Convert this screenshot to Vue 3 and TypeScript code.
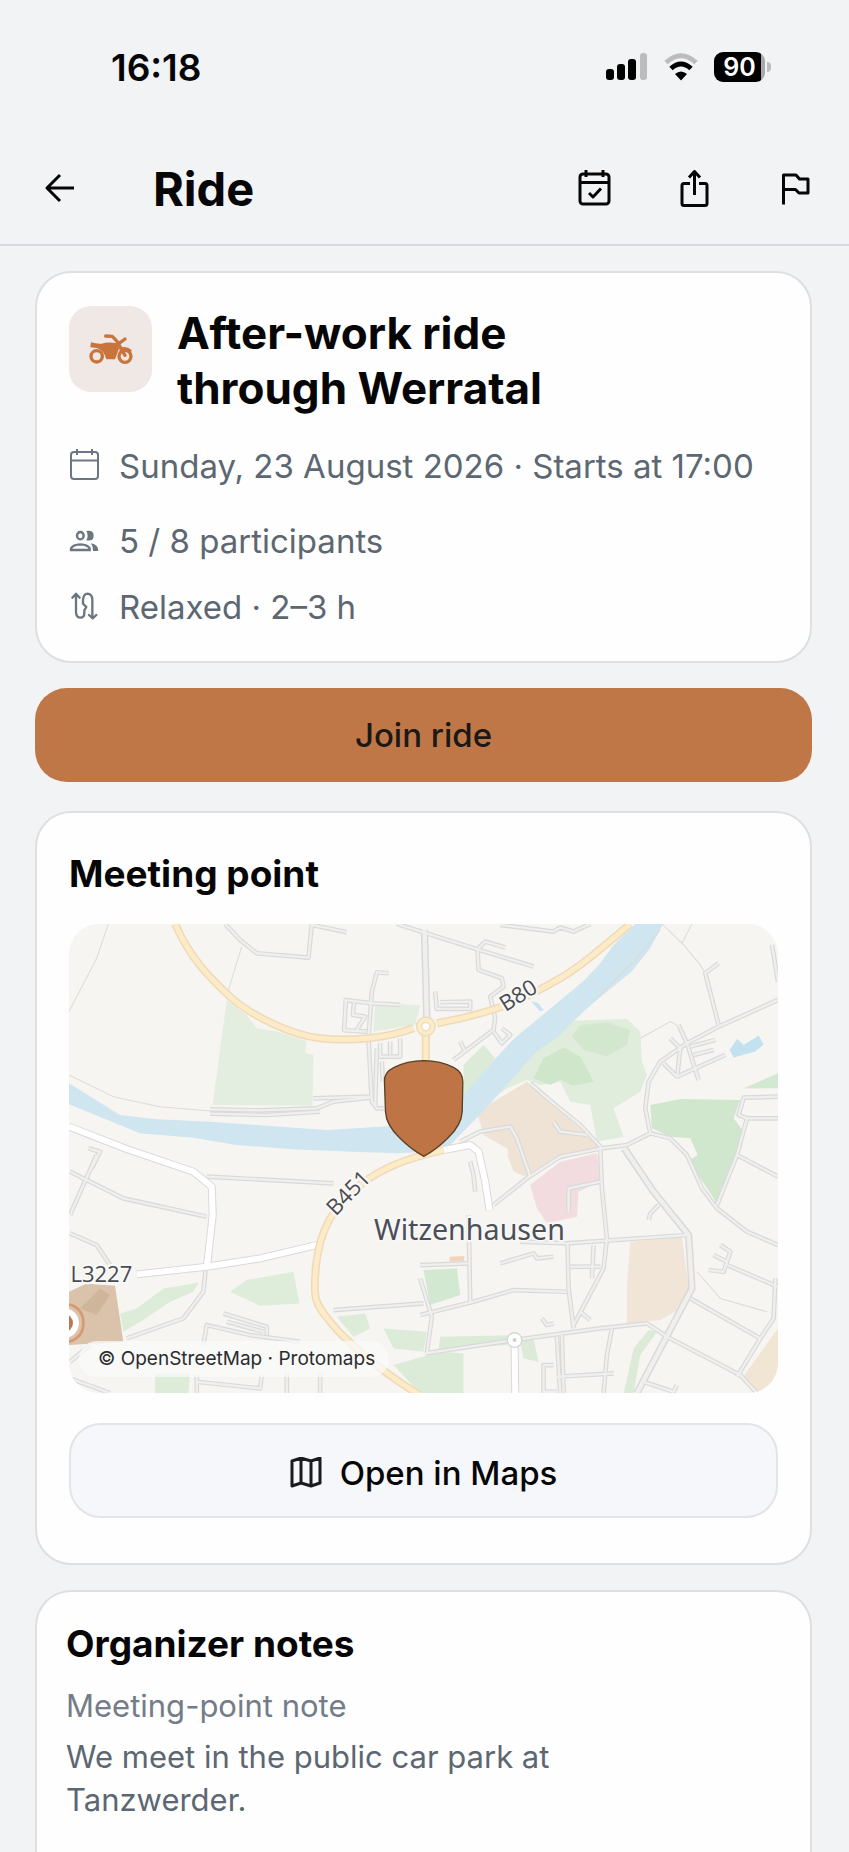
<script setup lang="ts">
interface Area { fill: string; points: string }

const areas: Area[] = [
  { fill: '#e3eee0', points: '500,255 560,300 590,340 650,350 740,378 735,415 760,420 757,572 458,570 475,440' },
  { fill: '#e3eee0', points: '945,262 1080,272 1065,330 940,350' },
  { fill: '#e0eddc', points: '1160,655 1350,480 1500,318 1700,312 1740,350 1745,440 1760,480 1740,530 1660,580 1690,665 1610,680 1590,570 1530,560 1500,500 1440,510 1400,495 1340,520' },
  { fill: '#cfe6cb', points: '1420,490 1450,430 1510,398 1560,425 1600,500 1540,512 1500,495 1470,510' },
  { fill: '#d3e7cf', points: '1535,365 1560,330 1640,322 1710,345 1700,390 1640,425 1570,405' },
  { fill: '#dcebd8', points: '1210,450 1270,390 1305,430 1230,520 1210,540' },
  { fill: '#d0e7cd', points: '1770,570 1860,552 2040,555 2020,610 2050,650 2030,720 1970,870 1960,850 1920,790 1880,740 1912,720 1890,670 1830,665 1775,640' },
  { fill: '#d3e8d0', points: '2050,520 2153,475 2153,520' },
  { fill: '#efe3d6', points: '1250,590 1400,500 1450,540 1580,660 1620,700 1480,740 1410,790 1370,775 1340,700 1270,660' },
  { fill: '#efe3d6', points: '1340,715 1380,730 1400,780 1360,770' },
  { fill: '#f3dce0', points: '1410,810 1500,740 1610,715 1625,795 1555,830 1550,905 1460,925 1430,880' },
  { fill: '#f1e5d7', points: '1710,980 1865,965 1885,1120 1860,1180 1800,1215 1700,1225 1700,1120' },
  { fill: '#f1e5d3', points: '2153,1240 2153,1434 2080,1434 2045,1390' },
  { fill: '#dcecd9', points: '180,1195 230,1180 310,1120 415,1103 400,1130 330,1160 250,1215 190,1250' },
  { fill: '#deecda', points: '510,1130 560,1095 700,1070 718,1165 600,1172' },
  { fill: '#dcecd9', points: '285,1375 390,1375 385,1435 285,1435' },
  { fill: '#d3e8d0', points: '1090,1065 1190,1060 1200,1140 1110,1170' },
  { fill: '#dcecd9', points: '830,1205 915,1195 930,1240 880,1265' },
  { fill: '#dcecd9', points: '970,1240 1100,1250 1090,1310 1000,1300' },
  { fill: '#dcebd8', points: '1000,1350 1140,1310 1210,1315 1210,1435 1080,1435' },
  { fill: '#dcebd8', points: '1140,1265 1360,1260 1340,1290 1135,1305' },
  { fill: '#dcebd8', points: '1380,1280 1420,1270 1435,1340 1390,1330' },
  { fill: '#dcebd8', points: '1765,1245 1790,1250 1740,1320 1720,1435 1690,1435 1720,1300' },
  { fill: '#dbc3ab', points: '27,1130 80,1105 165,1112 190,1280 27,1290' },
  { fill: '#cfb59a', points: '60,1180 120,1120 150,1140 110,1200' },
  { fill: '#f0d4bd', points: '1168,1025 1212,1023 1212,1038 1168,1040' },
]

const minorRoads: string[] = [
  '495,27 540,75 590,115 745,128 755,30 860,52',
  '1010,27 1240,100 1420,155',
  '985,175 950,172 935,230 925,370 935,560 950,580 970,580',
  '850,255 935,265 1020,270',
  '857,258 852,346 920,350',
  '882,262 878,300 915,305 890,345',
  '960,385 960,425 1020,425 1020,370',
  '990,380 990,420',
  '950,400 945,575',
  '965,440 968,500',
  '450,583 600,586 770,580 820,560 930,548',
  '450,596 620,600 780,590',
  '760,550 930,545',
  '1255,100 1275,80 1335,98',
  '1252,100 1255,165 1325,190 1330,215 1290,245 1305,310 1300,345 1180,435',
  '1125,230 1130,282 1230,282 1230,260 1140,262',
  '1200,380 1215,410',
  '1300,350 1325,385 1350,360 1325,340',
  '1320,30 1480,50 1500,38 1540,50 1590,27',
  '1975,145 1935,175 1975,330',
  '2153,255 1975,335 1880,385 1800,440 1765,500 1755,580 1770,655',
  '1855,330 1880,385 1915,495',
  '1810,445 1850,485 1995,420',
  '1830,370 1860,400 1850,490',
  '1890,395 1965,375',
  '1900,420 1960,405',
  '2135,90 2153,200',
  '1410,505 1480,565 1560,630 1625,700 1700,690 1770,655 1830,670 1880,720 1925,820 1970,880 2060,950 2153,990',
  '2153,545 2050,548 2035,600 2060,610 2153,610',
  '2060,610 2030,720 1970,870',
  '2030,720 2153,785',
  '1480,620 1500,650 1580,660',
  '1625,700 1500,725 1400,790 1300,870',
  '1200,680 1260,650 1350,635 1370,670 1410,785',
  '1620,700 1625,820 1640,970 1630,1060 1540,1230',
  '1380,980 1520,985 1880,960',
  '1522,985 1525,1120 1540,1240',
  '1080,1200 1240,1160 1360,1125 1520,1130',
  '1225,900 1230,1160',
  '1080,1050 1225,1045',
  '1080,1090 1115,1205 1100,1315',
  '1095,1315 1360,1275 1620,1240 1760,1225 1820,1265 2040,1380 2090,1434',
  '1890,1150 2100,1270',
  '2145,1090 2140,1210 2100,1270 2030,1385',
  '2153,1115 2000,1050',
  '1980,990 2010,1010 1990,1070 1945,1065',
  '1960,1020 2000,1040',
  '1490,1265 1500,1434',
  '1505,1260 1510,1434',
  '1655,1240 1640,1320 1630,1434',
  '1490,1385 1660,1375',
  '1750,1400 1840,1430 1850,1410',
  '1525,890 1525,820 1620,800',
  '1765,915 1770,895 1795,870',
  '1600,990 1595,1090',
  '1530,1055 1620,1055',
  '1320,1045 1420,1015 1430,1030 1480,1025',
  '1480,1350 1450,1350 1450,1430 1490,1430',
  '1445,1210 1460,1230 1480,1225',
  '1560,1190 1590,1215',
  '1230,740 1240,780 1245,830',
  '110,720 30,900',
  '30,770 190,850 440,905',
  '440,785 820,805',
  '30,955 110,990 150,1050',
  '200,1270 370,1210 430,1130 440,1030',
  '820,1185 1090,1165',
  '430,1290 440,1230 570,1260 720,1280',
  '490,1195 620,1235 620,1260',
  '500,1220 610,1250',
  '30,1340 90,1290',
  '410,1400 600,1420 605,1380',
  '410,1380 410,1434',
  '680,1370 680,1434',
  '780,1370 780,1434',
  '30,1390 150,1434',
  '95,760 120,710 85,700',
]

const wideRoads: string[] = [
  '1093,45 1100,310',
  '1692,700 1780,830 1885,960 1895,1120 1730,1434',
]

const whiteRoads: string[] = [
  '27,635 200,702 400,770 455,815 458,900 440,1060',
  '230,1078 440,1055 600,1030 770,990',
  '1150,705 1230,690 1255,710 1275,800 1288,885',
  '1363,1275 1365,1434',
]

const tracks: string[] = [
  '145,27 110,130 27,290',
  '545,95 505,225',
  '27,480 160,545 300,575 450,588',
  '1805,27 1870,90 1920,150 1935,175',
  '1895,27 1865,85',
  '1600,260 1720,140 1800,45',
  '1740,370 1830,320 1850,330',
  '1910,1070 1980,1150 2120,1190',
]

const yellowRoads: string[] = [
  'M345 27C390 130 450 190 510 245S690 360 780 370S980 370 1060 340',
  'M1130 325C1200 312 1250 300 1310 280S1440 225 1500 190S1630 95 1710 27',
  'M1097 360V440',
  'M1150 705C1080 722 980 745 900 810S780 940 768 1050S770 1170 810 1220S960 1370 1080 1440',
]

const openInMaps = () => window.open('geo:51.34,9.86')
</script>

<template>
  <div class="page">
    <div class="status">
      <time class="clock">16:18</time>
      <div class="status-icons">
        <svg width="42" height="28" viewBox="0 0 42 28" aria-hidden="true">
          <rect x="0" y="16" width="8" height="11" rx="3" />
          <rect x="11" y="11" width="8" height="16" rx="3" />
          <rect x="22" y="6" width="8" height="21" rx="3" />
          <rect x="34" y="0" width="7" height="27" rx="3" fill="#bcbcbe" />
        </svg>
        <svg width="34" height="28" viewBox="0 0 34 28" fill="none" aria-hidden="true">
          <path d="M2 9.500Q17-4 32 9.500" stroke="#bcbcbe" stroke-width="5" />
          <path d="M7 15.500Q17 6.500 27 15.500" stroke="#000" stroke-width="5" />
          <path d="M11 21Q17 16 23 21L17 27.500Z" fill="#000" />
        </svg>
        <div class="battery"><span class="battery-level">90</span></div>
      </div>
    </div>

    <header class="bar">
      <button class="icon-button" type="button" aria-label="Back">
        <svg width="32" height="32" viewBox="0 0 32 32" class="line"><path d="M30 15H4M16 2L3 15L16 28" /></svg>
      </button>
      <h1>Ride</h1>
      <div class="actions">
        <button class="icon-button" type="button" aria-label="Add to calendar">
          <svg width="34" height="38" viewBox="0 0 34 38" class="line">
            <rect x="3" y="4" width="29" height="30" rx="3" />
            <path d="M3 12.500H32M9 0V7M26 0V7M12 23L16 27L24 18.500" />
          </svg>
        </button>
        <button class="icon-button" type="button" aria-label="Share">
          <svg width="34" height="38" viewBox="0 0 34 38" class="line">
            <path d="M12 13.500H6Q4 13.500 4 15.500V33.500Q4 35.500 6 35.500H27Q29 35.500 29 33.500V15.500Q29 13.500 27 13.500H21M16.500 25V2M11 7.500L16.500 1.500L22 7.500" />
          </svg>
        </button>
        <button class="icon-button" type="button" aria-label="Report">
          <svg width="34" height="38" viewBox="0 0 34 38" class="line">
            <path d="M4.500 34.500V5H17L20.500 9H29V23H20L16.500 19.500H4.500" />
          </svg>
        </button>
      </div>
    </header>

    <main>
      <section class="card summary">
        <div class="heading">
          <div class="tile">
            <svg width="44" height="32" viewBox="0 0 132 94" aria-hidden="true">
              <g fill="none" stroke="#c9743c" stroke-width="10">
                <circle cx="23" cy="69" r="17" />
                <circle cx="108" cy="69" r="18" />
                <path d="M50 8L70 9L84 24L108 66M84 32L96 26L108 17" stroke-linecap="round" stroke-linejoin="round" />
              </g>
              <path d="M6 27Q22 32 38 31Q56 25 84 30L90 46L78 78H52Q46 52 24 44L4 42Z" fill="#c9743c" />
              <path d="M92 44Q112 36 128 50L126 58Q106 48 92 60Z" fill="#c9743c" />
            </svg>
          </div>
          <h2 class="title">After-work ride<br>through Werratal</h2>
        </div>
        <ul class="facts">
          <li>
            <svg width="30" height="34" viewBox="0 0 30 34" class="fact-line">
              <rect x="2" y="3" width="27" height="27" rx="3" />
              <path d="M2 11.500H29M8 0V6M23 0V6" />
            </svg>
            <span>Sunday, 23 August 2026 · Starts at 17:00</span>
          </li>
          <li>
            <svg width="30" height="32" viewBox="0 0 90 96">
              <g fill="none" stroke="#6c7681" stroke-width="7">
                <ellipse cx="34" cy="32" rx="10" ry="11" />
                <path d="M6 75V70Q12 59 34 58Q56 59 62 70V75Z" />
              </g>
              <path d="M52 18Q74 14 74 32Q74 50 52 46Q60 32 52 18ZM66 55Q88 59 88 78H72Q72 64 66 55Z" fill="#6c7681" />
            </svg>
            <span>5 / 8 participants</span>
          </li>
          <li>
            <svg width="30" height="32" viewBox="0 0 90 96" fill="none" stroke="#6c7681" stroke-width="7" stroke-linecap="round" stroke-linejoin="round">
              <path d="M10 20L21 8L32 20M21 10V64Q22 80 34 80Q46 80 46 66V58L52 48L42 38V26Q44 8 56 8Q70 10 70 26V80M60 72L71 82L82 72" />
            </svg>
            <span>Relaxed · 2–3 h</span>
          </li>
        </ul>
      </section>

      <button class="join" type="button">Join ride</button>

      <section class="card meeting">
        <h2>Meeting point</h2>
        <div class="map">
          <svg class="map-canvas" viewBox="27 27 2126 1407" preserveAspectRatio="xMidYMid slice" role="img" aria-label="Map of Witzenhausen">
            <rect x="27" y="27" width="2126" height="1407" fill="#f6f5f2" />
            <polygon v-for="a in areas" :key="a.points" :points="a.points" :fill="a.fill" />
            <polygon
              fill="#cfe5f0"
              points="27,505 180,600 280,612 450,620 620,632 800,645 985,634 1060,612 1205,545 1270,470 1360,372 1450,298 1570,198 1620,145 1660,90 1725,27 1808,27 1770,100 1712,172 1630,238 1570,290 1490,368 1430,408 1362,485 1270,588 1170,690 1100,710 1010,715 880,710 700,703 530,690 400,668 240,655 130,610 27,568"
            />
            <polygon fill="#c3e1ef" points="2008,405 2030,372 2050,390 2095,362 2110,388 2085,410 2020,428" />
            <polygon fill="#c9e3ef" points="1412,258 1435,265 1450,285 1440,290" />
            <g class="track"><polyline v-for="t in tracks" :key="t" :points="t" /></g>
            <g class="casing"><polyline v-for="r in minorRoads" :key="r" :points="r" /></g>
            <g class="casing wide"><polyline v-for="r in wideRoads" :key="r" :points="r" /></g>
            <g class="inner"><polyline v-for="r in minorRoads" :key="r" :points="r" /></g>
            <g class="inner wide"><polyline v-for="r in wideRoads" :key="r" :points="r" /></g>
            <g class="white-casing"><polyline v-for="r in whiteRoads" :key="r" :points="r" /></g>
            <g class="white-inner"><polyline v-for="r in whiteRoads" :key="r" :points="r" /></g>
            <g class="yellow-casing"><path v-for="r in yellowRoads" :key="r" :d="r" /></g>
            <g class="yellow-inner"><path v-for="r in yellowRoads" :key="r" :d="r" /></g>
            <circle cx="1097" cy="335" r="20" fill="#fff" stroke="#f0dcb9" stroke-width="20" />
            <circle cx="1097" cy="335" r="20" fill="none" stroke="#fceccb" stroke-width="11" />
            <circle cx="1363" cy="1275" r="22" fill="#fff" stroke="#d6d6d6" stroke-width="4" />
            <circle cx="1363" cy="1275" r="6" fill="#d0d0d0" />
            <path d="M27 1168Q70 1180 70 1224T27 1280" fill="none" stroke="#d59a70" stroke-width="8" />
            <circle cx="12" cy="1224" r="36" fill="#b8794f" stroke="#fff" stroke-width="18" />
            <g class="road-label">
              <text transform="translate(1374 242) rotate(-32)" y="22">B80</text>
              <text transform="translate(865 834) rotate(-46)" y="22">B451</text>
              <text x="124" y="1102">L3227</text>
            </g>
            <text class="town-label" x="1228" y="975">Witzenhausen</text>
            <path
              d="M1091 724Q1052 702 1018 668Q978 630 976 590L973 502Q970 472 1002 457Q1040 438 1091 437Q1142 438 1180 457Q1209 472 1208 502L1206 590Q1204 630 1164 668Q1130 702 1091 724Z"
              fill="#be7445" stroke="#5b4029" stroke-width="4" stroke-linejoin="round"
            />
          </svg>
          <small class="credit">© OpenStreetMap · Protomaps</small>
        </div>
        <button class="open" type="button" @click="openInMaps">
          <svg width="32" height="32" viewBox="0 0 32 32" class="map-icon">
            <path d="M2 4L11 1L21 4L30 1V26L21 29L11 26L2 29ZM11 1V26M21 4V29" />
          </svg>
          <span>Open in Maps</span>
        </button>
      </section>

      <section class="card notes">
        <h2>Organizer notes</h2>
        <h3>Meeting-point note</h3>
        <p>We meet in the public car park at<br>Tanzwerder.</p>
      </section>
    </main>
  </div>
</template>

<style>
body {
  margin: 0;
  background: #f2f3f5;
}
</style>

<style scoped>
.page {
  box-sizing: border-box;
  min-height: 100vh;
  display: flex;
  flex-direction: column;
  background: #f2f3f5;
  color: #060607;
  font-family: Inter, "Liberation Sans", sans-serif;
}
h1, h2, h3, p, ul {
  margin: 0;
  padding: 0;
}
svg {
  display: block;
  flex: none;
}
button {
  font: inherit;
  color: inherit;
  padding: 0;
  border: 0;
  cursor: pointer;
}
.status {
  display: flex;
  justify-content: space-between;
  align-items: center;
  height: 134px;
  padding: 0 78px 0 111px;
}
.clock {
  font-size: 37px;
  font-weight: 600;
}
.status-icons {
  display: flex;
  align-items: center;
  gap: 16px;
}
.battery {
  position: relative;
  width: 51px;
  height: 30px;
  border-radius: 9px;
  background: linear-gradient(90deg, #000 47px, #a9a9ab 47px);
  color: #fff;
  margin-right: 6px;
}
.battery::after {
  content: "";
  position: absolute;
  right: -6px;
  top: 10px;
  width: 4px;
  height: 10px;
  border-radius: 0 5px 5px 0;
  background: #bcbcbe;
}
.battery-level {
  display: block;
  text-align: center;
  font-size: 25px;
  font-weight: 600;
  line-height: 30px;
}
.bar {
  display: flex;
  align-items: center;
  height: 110px;
  padding: 0 36px 0 44px;
  border-bottom: 2px solid #d9d9df;
}
.icon-button {
  background: none;
}
.line {
  fill: none;
  stroke: #060607;
  stroke-width: 3;
  stroke-linejoin: round;
}
h1 {
  margin-left: 77px;
  font-size: 47px;
  font-weight: 700;
  line-height: 56px;
}
.actions {
  display: flex;
  gap: 67px;
  margin-left: auto;
}
main {
  flex: 1;
  display: flex;
  flex-direction: column;
  padding: 25px 37px 0 35px;
}
.card {
  background: #fefefe;
  border: 2px solid #dddfe1;
  border-radius: 36px;
}
.summary {
  padding: 33px 32px 34px;
}
.heading {
  display: flex;
  gap: 25px;
}
.tile {
  display: flex;
  align-items: center;
  justify-content: center;
  width: 83px;
  height: 86px;
  border-radius: 22px;
  background: #f0e8e4;
}
.title {
  font-size: 44px;
  font-weight: 700;
  line-height: 55px;
}
.facts {
  list-style: none;
  color: #5d6772;
  font-size: 33px;
  line-height: 40px;
  padding-top: 30px;
}
.facts li {
  display: flex;
  align-items: center;
  gap: 20px;
}
.facts li + li {
  margin-top: 26px;
}
.facts li:nth-child(2) {
  margin-top: 35px;
}
.fact-line {
  fill: none;
  stroke: #6c7681;
  stroke-width: 2;
}
.join {
  height: 94px;
  margin: 25px 0 29px;
  border-radius: 32px;
  background: #bf7748;
  color: #1c1816;
  font-size: 33px;
  font-weight: 500;
}
.meeting {
  padding: 37px 32px 45px;
}
.card h2:not(.title) {
  font-size: 37px;
  font-weight: 700;
  line-height: 48px;
}
.map {
  position: relative;
  height: 469px;
  margin: 26px 0 30px;
  border-radius: 30px;
  overflow: hidden;
}
.map-canvas {
  width: 100%;
  height: 100%;
}
.map-canvas g {
  fill: none;
  stroke-linejoin: round;
}
.track { stroke: #dcdcd4; stroke-width: 3; }
.casing { stroke: #d9d9d9; stroke-width: 14; }
.casing.wide { stroke-width: 22; }
.inner { stroke: #efefee; stroke-width: 7; }
.inner.wide { stroke-width: 13; }
.white-casing { stroke: #dadada; stroke-width: 24; }
.white-inner { stroke: #fff; stroke-width: 18; }
.yellow-casing { stroke: #eedab8; stroke-width: 24; }
.yellow-inner { stroke: #fcebc6; stroke-width: 15; }
.map-canvas .road-label {
  fill: #4a4b50;
  stroke: #f8f8f6;
  stroke-width: 14;
  paint-order: stroke;
  font-family: "Open Sans", "Noto Sans", sans-serif;
  font-size: 66px;
  font-weight: 500;
  text-anchor: middle;
}
.town-label {
  fill: #4c4f5a;
  stroke: #f8f8f6;
  stroke-width: 10;
  paint-order: stroke;
  font-family: "Noto Sans", "Open Sans", sans-serif;
  font-size: 86px;
  text-anchor: middle;
}
.credit {
  position: absolute;
  left: 10px;
  bottom: 16px;
  padding: 0 14px 0 19px;
  border-radius: 18px;
  background: rgba(250, 250, 249, 0.75);
  color: #2b2c2e;
  font-size: 19px;
  line-height: 36px;
}
.open {
  display: flex;
  align-items: center;
  justify-content: center;
  gap: 18px;
  box-sizing: border-box;
  width: 100%;
  height: 95px;
  padding-top: 4px;
  border: 2px solid #e2e4e9;
  border-radius: 32px;
  background: #f6f7fb;
  font-size: 33px;
  font-weight: 500;
}
.map-icon {
  fill: none;
  stroke: #1a1b1e;
  stroke-width: 3;
  stroke-linejoin: round;
}
.notes {
  flex: 1;
  margin-top: 25px;
  padding: 28px 29px 20px;
  border-bottom: 0;
  border-radius: 36px 36px 0 0;
}
h3 {
  margin-top: 16px;
  color: #737c88;
  font-size: 31px;
  font-weight: 400;
  line-height: 43px;
}
.notes p {
  margin-top: 8px;
  color: #5d6772;
  font-size: 31px;
  line-height: 43px;
}
</style>
